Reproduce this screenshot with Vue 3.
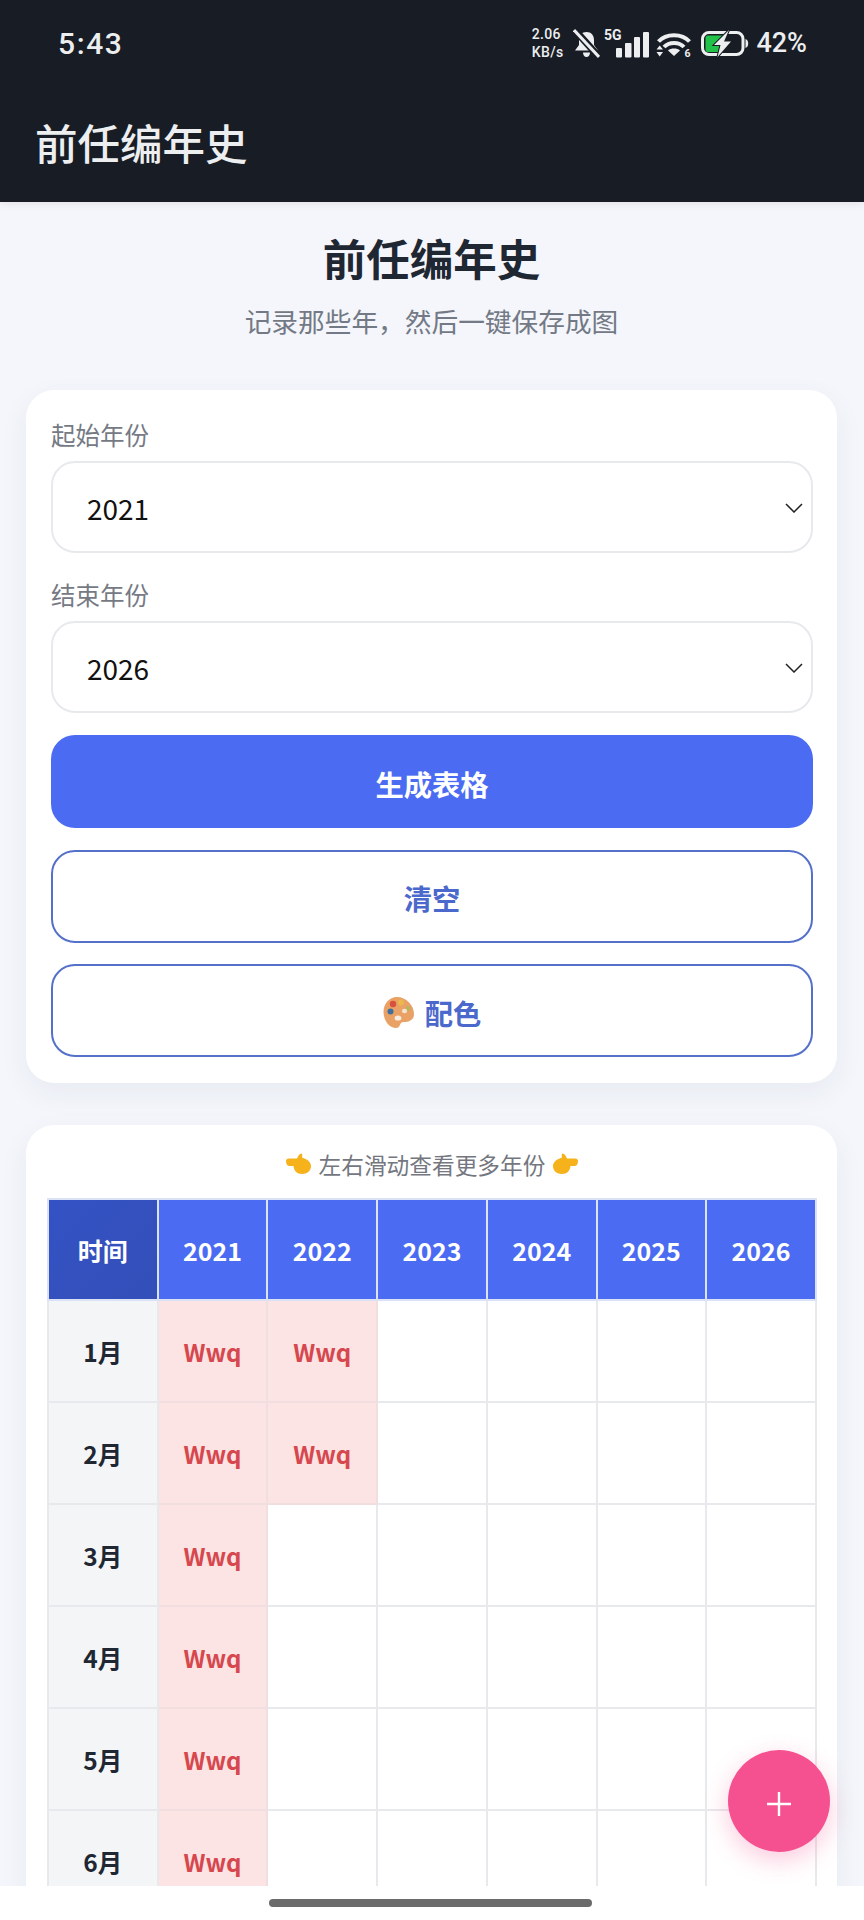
<script setup>
import { ref } from 'vue'

const years = [2021, 2022, 2023, 2024, 2025, 2026]
const startYear = ref(2021)
const endYear = ref(2026)
const filled = { 1: [2021, 2022], 2: [2021, 2022], 3: [2021], 4: [2021], 5: [2021], 6: [2021] }
const rows = Array.from({ length: 6 }, (_, i) => i + 1).map((m) => ({
  label: m + '月',
  cells: years.map((y) => ({ year: y, name: filled[m].includes(y) ? 'Wwq' : '' }))
}))
</script>

<template>
  <div class="screen">
    <header class="topbar">
      <div class="status">
        <span class="time">5:43</span>
        <div class="status-right">
          <div class="speed"><span>2.06</span><span>KB/s</span></div>
          <svg class="i-bell" width="27" height="29" viewBox="0 0 27 29">
            <path d="M13.500 3c4.800 0 7.500 3.500 7.500 8v5l4 5.500H2L6 16v-5c0-4.500 2.800-8 7.500-8z" fill="#eceef0"/>
            <path d="M10 23.500h7c0 2.700-1.500 4.500-3.500 4.500S10 26.200 10 23.500z" fill="#eceef0"/>
            <path d="M1 0 26 28" stroke="#181c24" stroke-width="7"/>
            <path d="M1 1 26 28" stroke="#eceef0" stroke-width="3"/>
          </svg>
          <svg class="i-signal" width="47" height="35" viewBox="-2 -3 47 35">
            <text x="0" y="11" font-size="14" font-weight="700" font-family="Roboto, sans-serif" fill="#eceef0">5G</text>
            <rect x="12" y="19" width="6" height="9.500" rx="1" fill="#eceef0"/>
            <rect x="21" y="14" width="6.500" height="14.500" rx="1" fill="#eceef0"/>
            <rect x="30" y="8" width="6" height="20.500" rx="1" fill="#eceef0"/>
            <rect x="39" y="3" width="6" height="25.500" rx="1" fill="#eceef0"/>
          </svg>
          <svg class="i-wifi" width="39" height="31" viewBox="0 -3 39 31">
            <path d="M2.500 9.500C10 1 26 1 33.500 9.500" fill="none" stroke="#eceef0" stroke-width="4"/>
            <path d="M8 15C13 9.500 23 9.500 28 15" fill="none" stroke="#eceef0" stroke-width="4"/>
            <path d="M12 18.500c3-2.600 9-2.600 12 0l-6 5.500z" fill="#eceef0"/>
            <path d="M0.500 17.500h6.500L3.700 13.500zM0.500 20h6.500L3.700 24.500z" fill="#eceef0"/>
            <text x="28.500" y="24.500" font-size="10.500" font-weight="700" font-family="Roboto, sans-serif" fill="#eceef0">6</text>
          </svg>
          <svg class="i-batt" width="48" height="29" viewBox="0 -2 48 29">
            <rect x="1.500" y="1.500" width="40.500" height="22" rx="6.500" fill="none" stroke="#eceef0" stroke-width="3"/>
            <path d="M44.500 8c2 .8 2.700 2.400 2.700 4.500s-.7 3.700-2.700 4.500z" fill="#eceef0"/>
            <path d="M7 4.500H22l-8 10h5l-1 6.500H7A2.500 2.500 0 0 1 4.500 18.500v-11.500A2.500 2.500 0 0 1 7 4.500z" fill="#22c14a"/>
            <path d="M28 -1 13 14H19.500L16.500 26 30 10.500H23z" fill="#eceef0" stroke="#181c24" stroke-width="2" paint-order="stroke"/>
          </svg>
          <span class="pct">42%</span>
        </div>
      </div>
      <div class="appbar">前任编年史</div>
    </header>

    <main class="page">
      <h1 class="title">前任编年史</h1>
      <p class="subtitle">记录那些年，然后一键保存成图</p>

      <section class="card controls">
        <label class="field">
          <span class="field-label">起始年份</span>
          <span class="select-wrap">
            <select v-model="startYear" class="select">
              <option v-for="y in years" :key="y" :value="y">{{ y }}</option>
            </select>
            <svg class="chevron" width="18" height="10" viewBox="0 0 18 10">
              <path d="M1 1l8 8 8-8" fill="none" stroke="#222" stroke-width="1.500"/>
            </svg>
          </span>
        </label>
        <label class="field">
          <span class="field-label">结束年份</span>
          <span class="select-wrap">
            <select v-model="endYear" class="select">
              <option v-for="y in years" :key="y" :value="y">{{ y }}</option>
            </select>
            <svg class="chevron" width="18" height="10" viewBox="0 0 18 10">
              <path d="M1 1l8 8 8-8" fill="none" stroke="#222" stroke-width="1.500"/>
            </svg>
          </span>
        </label>
        <button class="btn primary">生成表格</button>
        <button class="btn outline">清空</button>
        <button class="btn outline">
          <svg class="palette" width="32" height="33" viewBox="0 0 32 33">
            <path d="M14 1C6 1 0.500 8 0.500 16S6 32 13 32c4 0 3.500-3.500 5-5 1.500-1.500 5-.5 8.500-2 3-1.300 4.500-3.500 4.500-7C31 9 23 1 14 1z" fill="#e9a165"/>
            <circle cx="10" cy="8" r="3.200" fill="#d8503e"/>
            <circle cx="18" cy="6.500" r="3" fill="#eab84c"/>
            <circle cx="25" cy="12.500" r="2.600" fill="#bdb25e"/>
            <circle cx="7.500" cy="15.500" r="3" fill="#3f6f9e"/>
            <ellipse cx="15" cy="22" rx="3.400" ry="2.600" fill="#f8ecdf"/>
            <ellipse cx="21.500" cy="15" rx="2.600" ry="2.200" fill="#f6e3cf"/>
          </svg>
          <span>配色</span>
        </button>
      </section>

      <section class="card grid-card">
        <p class="hint">
          <svg class="hand" width="27" height="22" viewBox="0 0 27 22">
            <path d="M1 8c0-1.500 1-2.500 3-2.500h8C13 3.500 14 1 16 .5c1.500 0 1.500 2 1 4 5 1.500 9 4.500 9 8.500 0 5-4 8-9 8-5 0-8-3-8.500-8H4C2 13 1 10 1 8z" fill="#f5b21b"/>
          </svg>
          <span>左右滑动查看更多年份</span>
          <svg class="hand flip" width="27" height="22" viewBox="0 0 27 22">
            <path d="M1 8c0-1.500 1-2.500 3-2.500h8C13 3.500 14 1 16 .5c1.500 0 1.500 2 1 4 5 1.500 9 4.500 9 8.500 0 5-4 8-9 8-5 0-8-3-8.500-8H4C2 13 1 10 1 8z" fill="#f5b21b"/>
          </svg>
        </p>
        <table class="chart">
          <thead>
            <tr>
              <th class="corner">时间</th>
              <th v-for="y in years" :key="y">{{ y }}</th>
            </tr>
          </thead>
          <tbody>
            <tr v-for="row in rows" :key="row.label">
              <td class="month">{{ row.label }}</td>
              <td v-for="c in row.cells" :key="c.year" :class="{ taken: c.name }">{{ c.name }}</td>
            </tr>
          </tbody>
        </table>
      </section>
    </main>

    <div class="gesture"><span class="pill"></span></div>
    <button class="fab" aria-label="添加">
      <svg width="24" height="24" viewBox="0 0 24 24">
        <path d="M12 0v24M0 12h24" stroke="#fff" stroke-width="2.400"/>
      </svg>
    </button>
  </div>
</template>

<style scoped>
.screen {
  position: relative;
  width: 864px;
  height: 1920px;
  display: flex;
  flex-direction: column;
  overflow: hidden;
  background: #f4f6fb;
  font-family: "Noto Sans CJK SC", "Noto Sans", sans-serif;
}
.topbar {
  height: 202px;
  flex: none;
  background: #181c24;
  color: #eceef0;
  box-shadow: 0 2px 8px rgba(0, 0, 0, 0.08);
  z-index: 1;
}
.status {
  height: 86px;
  padding: 0 57px 0 58px;
  display: flex;
  align-items: center;
  justify-content: space-between;
}
.time {
  font-family: Roboto, sans-serif;
  font-size: 30px;
  font-weight: 500;
  letter-spacing: 1.6px;
}
.status-right {
  display: flex;
  align-items: center;
}
.speed {
  flex: none;
  display: flex;
  flex-direction: column;
  font-family: Roboto, sans-serif;
  font-size: 14px;
  font-weight: 500;
  line-height: 18px;
  letter-spacing: 0.3px;
}
.i-bell { margin-left: 10px; }
.i-signal { margin-left: 2px; }
.i-wifi { margin-left: 7px; margin-top: 2px; }
.i-batt { margin-left: 6px; margin-top: 0; }
.pct {
  margin-left: 7px;
  font-family: Roboto, sans-serif;
  font-size: 27px;
  font-weight: 500;
}
.appbar {
  padding-left: 35px;
  font-size: 42.5px;
  font-weight: 500;
  line-height: 112px;
}
.page {
  flex: 1;
  min-height: 0;
  overflow: hidden;
  padding: 26px 27px 0 26px;
}
.title {
  margin: 0;
  text-align: center;
  font-size: 43.5px;
  font-weight: 700;
  line-height: 60px;
  color: #1f2733;
}
.subtitle {
  margin: 13px 0 49px;
  text-align: center;
  font-size: 26.7px;
  line-height: 40px;
  color: #737985;
}
.card {
  background: #fff;
  border-radius: 28px;
  box-shadow: 0 10px 30px rgba(30, 50, 90, 0.06);
}
.controls {
  padding: 29px 24px 26px 25px;
  display: flex;
  flex-direction: column;
  margin-bottom: 42px;
}
.field {
  display: flex;
  flex-direction: column;
  margin-bottom: 26px;
}
.field:nth-child(2) { margin-bottom: 22px; }
.field-label {
  font-size: 24.5px;
  line-height: 32px;
  margin-bottom: 10px;
  color: #757a84;
}
.select-wrap {
  position: relative;
  display: block;
}
.select {
  display: block;
  width: 100%;
  height: 92px;
  padding: 1px 0 0 34px;
  border: 2px solid #e7e9ed;
  border-radius: 24px;
  background: #fff;
  appearance: none;
  font-family: inherit;
  font-size: 28px;
  color: #111;
  outline: none;
}
.chevron {
  position: absolute;
  right: 10px;
  top: 42px;
  pointer-events: none;
}
.btn {
  height: 93px;
  margin-bottom: 21.5px;
  padding: 3px 0 0;
  border-radius: 24px;
  font-family: inherit;
  font-size: 28.3px;
  font-weight: 700;
  display: flex;
  align-items: center;
  justify-content: center;
  gap: 10px;
}
.btn:last-child { margin-bottom: 0; }
.primary {
  background: #4b6cf2;
  border: none;
  color: #fff;
}
.outline {
  background: #fff;
  border: 2.5px solid #5470c9;
  color: #4b68cc;
}
.grid-card {
  padding: 22px 20px 0 21px;
}
.hint {
  margin: 0 0 17px;
  height: 34px;
  display: flex;
  align-items: center;
  justify-content: center;
  gap: 7px;
  font-size: 22.7px;
  color: #74777f;
}
.flip { transform: scaleX(-1); }
.chart {
  width: 770px;
  table-layout: fixed;
  border-collapse: collapse;
}
.chart th {
  height: 101px;
  padding: 0;
  background: #4b6cf2;
  border: 2px solid #dbe2f6;
  color: #fff;
  font-size: 25px;
  font-weight: 700;
}
.chart th.corner {
  background: linear-gradient(135deg, #3452c4, #334fb8);
}
.chart td {
  height: 102px;
  padding: 0;
  border: 2px solid #e8e9ec;
  text-align: center;
  background: #fff;
  font-size: 24px;
  font-weight: 700;
}
.chart td.month {
  background: #f3f5f7;
  color: #1f2733;
  font-size: 24.5px;
}
.chart td.taken {
  background: #fce4e4;
  color: #d6474e;
  border-color: #f1dfe0;
}
.gesture {
  height: 34px;
  flex: none;
  background: #fff;
  display: flex;
  justify-content: center;
  padding-top: 13px;
  z-index: 1;
}
.pill {
  width: 323px;
  height: 8px;
  border-radius: 4px;
  background: #6b6b6b;
  margin-right: 4px;
}
.fab {
  position: absolute;
  left: 728px;
  top: 1750px;
  width: 102px;
  height: 102px;
  border: none;
  border-radius: 50%;
  padding: 6px 0 0;
  background: #f5508f;
  box-shadow: 0 8px 24px rgba(245, 80, 143, 0.3);
  display: flex;
  align-items: center;
  justify-content: center;
  z-index: 2;
}
</style>

<style>
html, body { margin: 0; }
*, *::before, *::after { box-sizing: border-box; }
</style>
